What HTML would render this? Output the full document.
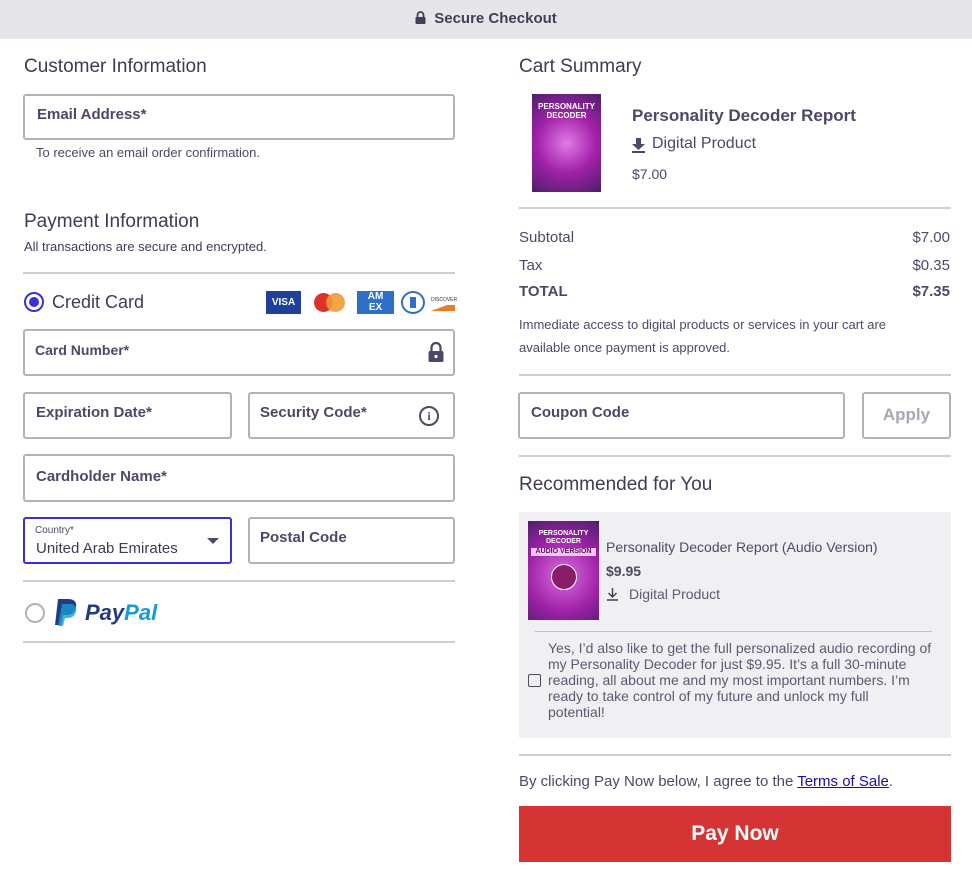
<!DOCTYPE html>
<html><head><meta charset="utf-8"><style>
*{box-sizing:border-box;margin:0;padding:0}
body{width:972px;height:880px;background:#fff;font-family:"Liberation Sans",sans-serif;color:#4a4a68;position:relative;overflow:hidden}
.a{position:absolute}
.hdr{left:0;top:0;width:972px;height:39px;background:#e6e6ea;text-align:center;font-weight:bold;font-size:15px;line-height:37px;color:#3f3f55}
h2{position:absolute;font-size:19px;font-weight:normal;color:#3c3c55}
.box{position:absolute;border:2px solid #b2b2bd;border-radius:3px;background:#fff}
.lbl{position:absolute;font-weight:bold;font-size:15px;color:#4a4a68}
.hr{position:absolute;height:2px;background:#cfcfd6}
.small{font-size:13px}
</style></head><body>
<div class="a hdr"><svg width="11" height="13" viewBox="0 0 11 13" style="vertical-align:-1px;margin-right:8px"><path d="M2.5 6V4a3 3 0 0 1 6 0v2" fill="none" stroke="#3f3f55" stroke-width="1.8"/><rect x="0.5" y="6" width="10" height="7" rx="1" fill="#3f3f55"/></svg>Secure Checkout</div>

<h2 style="left:24px;top:56px">Customer Information</h2>
<div class="box" style="left:23px;top:94px;width:432px;height:46px"></div>
<div class="lbl" style="left:37px;top:106px">Email Address*</div>
<div class="a small" style="left:36px;top:145px">To receive an email order confirmation.</div>

<h2 style="left:24px;top:211px">Payment Information</h2>
<div class="a small" style="left:24px;top:239px;color:#3c3c55">All transactions are secure and encrypted.</div>
<div class="hr" style="left:23px;top:272px;width:432px"></div>

<div class="a" style="left:24px;top:292px;width:20px;height:20px;border:2px solid #3a2fd8;border-radius:50%"></div>
<div class="a" style="left:29px;top:297px;width:10px;height:10px;background:#3a2fd8;border-radius:50%"></div>
<div class="a" style="left:52px;top:292px;font-size:18px;color:#3c3c55">Credit Card</div>
<div class="a" style="left:266px;top:291px;width:35px;height:23px;background:#1f3f9a;color:#fff;font-weight:bold;font-size:10px;text-align:center;line-height:23px">VISA</div>
<div class="a" style="left:314px;top:293px;width:19px;height:19px;border-radius:50%;background:#e0302e"></div>
<div class="a" style="left:326px;top:293px;width:19px;height:19px;border-radius:50%;background:#f09b36;opacity:.9"></div>
<div class="a" style="left:357px;top:291px;width:37px;height:23px;background:#2e6fc9;color:#fff;font-weight:bold;font-size:10px;text-align:center;line-height:11px">AM<br>EX</div>
<div class="a" style="left:401px;top:291px;width:24px;height:23px;border:2px solid #2e6fc9;border-radius:50%"></div>
<div class="a" style="left:410px;top:297px;width:6px;height:11px;background:#2e6fc9"></div>
<div class="a" style="left:431px;top:297px;font-size:5px;color:#333">DISCOVER</div>
<div class="a" style="left:431px;top:305px;width:24px;height:6px;background:linear-gradient(160deg,#fff 40%,#f07a2a 40%)"></div>

<div class="box" style="left:23px;top:329px;width:432px;height:47px"></div>
<div class="lbl" style="left:35px;top:342px;font-size:14px">Card Number*</div>
<svg class="a" style="left:428px;top:341px" width="16" height="22" viewBox="0 0 16 22"><path d="M3.5 10V6.5a4.5 4.5 0 0 1 9 0V10" fill="none" stroke="#4a4a68" stroke-width="2.2"/><rect x="0.5" y="10" width="15" height="11" rx="1.5" fill="#4a4a68"/><circle cx="8" cy="15.5" r="1.6" fill="#fff"/></svg>

<div class="box" style="left:23px;top:392px;width:209px;height:47px"></div>
<div class="lbl" style="left:36px;top:404px">Expiration Date*</div>
<div class="box" style="left:248px;top:392px;width:207px;height:47px"></div>
<div class="lbl" style="left:260px;top:404px">Security Code*</div>
<div class="a" style="left:419px;top:406px;width:20px;height:20px;border:2px solid #4a4a68;border-radius:50%;text-align:center;font-weight:bold;font-size:12px;line-height:16px;font-family:'Liberation Serif',serif">i</div>

<div class="box" style="left:23px;top:454px;width:432px;height:48px"></div>
<div class="lbl" style="left:36px;top:468px">Cardholder Name*</div>

<div class="box" style="left:23px;top:517px;width:209px;height:47px;border-color:#3a2fd8"></div>
<div class="a" style="left:35px;top:525px;font-size:10px">Country*</div>
<div class="a" style="left:36px;top:540px;font-size:15px;color:#3c3c55">United Arab Emirates</div>
<div class="a" style="left:207px;top:538px;width:0;height:0;border-left:6px solid transparent;border-right:6px solid transparent;border-top:6px solid #4a4a68"></div>
<div class="box" style="left:248px;top:517px;width:207px;height:47px"></div>
<div class="lbl" style="left:260px;top:529px">Postal Code</div>
<div class="hr" style="left:23px;top:580px;width:432px"></div>

<div class="a" style="left:25px;top:603px;width:20px;height:20px;border:2px solid #b2b2bd;border-radius:50%"></div>
<svg class="a" style="left:54px;top:599px" width="24" height="27" viewBox="0 0 24 27"><path d="M4 0h10c6 0 9 3 8 8-1 6-5 8-10 8h-3l-2 10H1z" fill="#253b80"/><path d="M8 5h8c5 0 7 3 6 7-1 5-4 7-9 7h-2l-2 8H4z" fill="#179bd7" opacity=".8"/></svg>
<div class="a" style="left:85px;top:600px;font-size:22px;font-weight:bold;font-style:italic"><span style="color:#253b80">Pay</span><span style="color:#179bd7">Pal</span></div>
<div class="hr" style="left:23px;top:641px;width:432px"></div>

<!-- right -->
<h2 style="left:519px;top:56px">Cart Summary</h2>
<div class="a" style="left:532px;top:94px;width:69px;height:98px;background:radial-gradient(circle at 50% 50%,#e27ae8,#a021a8 50%,#4b1f6a);color:#fff;font-size:8px;font-weight:bold;text-align:center;padding-top:8px;line-height:9px">PERSONALITY<br>DECODER</div>
<div class="a" style="left:632px;top:106px;font-size:17px;font-weight:bold">Personality Decoder Report</div>
<svg class="a" style="left:632px;top:138px" width="13" height="15" viewBox="0 0 13 15"><path d="M4 0h5v6h4L6.5 12 0 6h4z M0 13h13v2H0z" fill="#4a4a68"/></svg>
<div class="a" style="left:652px;top:135px;font-size:16px">Digital Product</div>
<div class="a" style="left:632px;top:166px;font-size:14px">$7.00</div>
<div class="hr" style="left:519px;top:207px;width:432px"></div>

<div class="a" style="left:519px;top:229px;font-size:15px">Subtotal</div>
<div class="a" style="right:22px;top:229px;font-size:15px">$7.00</div>
<div class="a" style="left:519px;top:257px;font-size:15px">Tax</div>
<div class="a" style="right:22px;top:257px;font-size:15px">$0.35</div>
<div class="a" style="left:519px;top:283px;font-size:15px;font-weight:bold">TOTAL</div>
<div class="a" style="right:22px;top:283px;font-size:15px;font-weight:bold">$7.35</div>
<div class="a small" style="left:519px;top:313px;width:420px;line-height:23px">Immediate access to digital products or services in your cart are available once payment is approved.</div>
<div class="hr" style="left:519px;top:374px;width:432px"></div>

<div class="box" style="left:518px;top:392px;width:327px;height:47px"></div>
<div class="lbl" style="left:531px;top:404px">Coupon Code</div>
<div class="box" style="left:862px;top:392px;width:89px;height:47px"></div>
<div class="a" style="left:862px;top:405px;width:89px;text-align:center;font-weight:bold;font-size:17px;color:#a8a8b4">Apply</div>
<div class="hr" style="left:519px;top:455px;width:432px"></div>

<h2 style="left:519px;top:474px">Recommended for You</h2>
<div class="a" style="left:519px;top:512px;width:432px;height:226px;background:#f0f0f3"></div>
<div class="a" style="left:528px;top:521px;width:71px;height:99px;background:radial-gradient(circle at 50% 55%,#d970e0,#a021a8 55%,#4b1f6a);color:#fff;font-size:7px;font-weight:bold;text-align:center;padding-top:9px;line-height:8px">PERSONALITY<br>DECODER<div style="background:#f3c6f5;color:#5a1060;margin:2px 3px">AUDIO VERSION</div><div style="width:26px;height:26px;border-radius:50%;background:#8a1d6a;border:1px solid #fff;margin:8px auto 0"></div></div>
<div class="a" style="left:606px;top:539px;font-size:14px">Personality Decoder Report (Audio Version)</div>
<div class="a" style="left:606px;top:563px;font-size:14px;font-weight:bold">$9.95</div>
<svg class="a" style="left:607px;top:588px" width="11" height="13" viewBox="0 0 11 13"><path d="M5.5 0v9M1.5 5l4 4 4-4M0 12h11" fill="none" stroke="#3c3c55" stroke-width="1.4"/></svg>
<div class="a" style="left:629px;top:586px;font-size:14px;color:#5a5a72">Digital Product</div>
<div class="a" style="left:535px;top:631px;width:397px;height:1px;background:#c0c0c8"></div>
<div class="a" style="left:528px;top:674px;width:13px;height:13px;border:1.5px solid #4a4a68;border-radius:2px"></div>
<div class="a" style="left:548px;top:640px;width:400px;font-size:14px;line-height:16px;color:#5a5a72;white-space:nowrap">Yes, I’d also like to get the full personalized audio recording of<br>my Personality Decoder for just $9.95. It’s a full 30-minute<br>reading, all about me and my most important numbers. I’m<br>ready to take control of my future and unlock my full<br>potential!</div>
<div class="hr" style="left:519px;top:754px;width:432px"></div>

<div class="a" style="left:519px;top:773px;font-size:15px">By clicking Pay Now below, I agree to the <span style="color:#1a0dab;text-decoration:underline">Terms of Sale</span>.</div>
<div class="a" style="left:519px;top:806px;width:432px;height:56px;background:#d43434;color:#fff;font-weight:bold;font-size:21px;text-align:center;line-height:56px">Pay Now</div>
</body></html>
